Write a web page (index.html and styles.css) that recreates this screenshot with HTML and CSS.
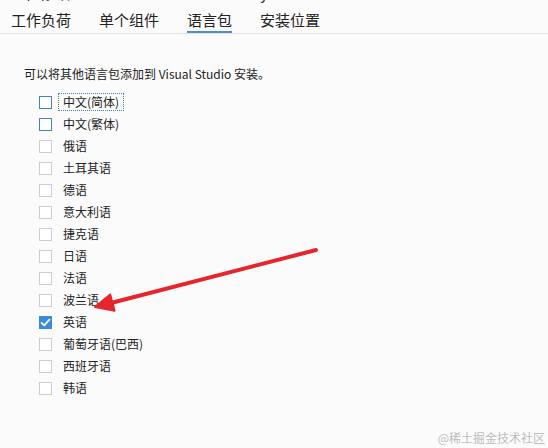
FILE: index.html
```html
<!DOCTYPE html>
<html lang="zh-CN">
<head>
    <meta charset="UTF-8">
    <meta name="viewport" content="width=device-width, initial-scale=1.0">
    <title>语言包</title>
    <link rel="stylesheet" href="styles.css">
</head>
<body>
    <div class="title-strip"><span>正在修改 — Visual Studio Community 2022</span></div>
    <div class="tabs">
        <div class="tab">工作负荷</div>
        <div class="tab">单个组件</div>
        <div class="tab active">语言包</div>
        <div class="tab">安装位置</div>
    </div>

    <div class="content">
        <p class="desc">可以将其他语言包添加到 Visual Studio 安装。</p>
        <ul class="lang-list">
            <li class="lang"><span class="box hot"></span><span class="label focus">中文(简体)</span></li>
            <li class="lang"><span class="box hot"></span><span class="label">中文(繁体)</span></li>
            <li class="lang"><span class="box"></span><span class="label">俄语</span></li>
            <li class="lang"><span class="box"></span><span class="label">土耳其语</span></li>
            <li class="lang"><span class="box"></span><span class="label">德语</span></li>
            <li class="lang"><span class="box"></span><span class="label">意大利语</span></li>
            <li class="lang"><span class="box"></span><span class="label">捷克语</span></li>
            <li class="lang"><span class="box"></span><span class="label">日语</span></li>
            <li class="lang"><span class="box"></span><span class="label">法语</span></li>
            <li class="lang"><span class="box"></span><span class="label">波兰语</span></li>
            <li class="lang">
                <span class="box checked">
                    <svg width="13" height="13" viewBox="0 0 13 13"><path d="M2.6 6.8 L5.2 9.3 L10.4 3.6" fill="none" stroke="#fff" stroke-width="1.8" stroke-linecap="round" stroke-linejoin="round"/></svg>
                </span><span class="label">英语</span>
            </li>
            <li class="lang"><span class="box"></span><span class="label">葡萄牙语(巴西)</span></li>
            <li class="lang"><span class="box"></span><span class="label">西班牙语</span></li>
            <li class="lang"><span class="box"></span><span class="label">韩语</span></li>
        </ul>
    </div>

    <!-- annotation arrow drawn over the list -->
    <svg class="arrow" width="548" height="448" viewBox="0 0 548 448">
        <line x1="316" y1="250" x2="111" y2="303" stroke="#e5262c" stroke-width="4" stroke-linecap="round"/>
        <polygon points="95,307 114.6,310.8 110.2,294.4" fill="#e5262c" stroke="#e5262c" stroke-width="2" stroke-linejoin="round"/>
    </svg>

    <div class="watermark">@稀土掘金技术社区</div>
</body>
</html>
```

FILE: styles.css
```css
body {
    margin: 0;
    font-family: "Noto Sans CJK SC", "Noto Sans", sans-serif;
    background-color: #fbfbfb;
    color: #222;
    position: relative;
    height: 448px;
    overflow: hidden;
}
.title-strip {
    height: 4px;
    overflow: hidden;
    padding-left: 10px;
    font-size: 15px;
    line-height: 18px;
    color: #222;
}
.title-strip span {
    display: block;
    margin-top: -16px;
}
.tabs {
    display: flex;
    gap: 28px;
    padding-left: 11px;
    border-bottom: 1px solid #e4e4e4;
}
.tab {
    font-size: 15px;
    line-height: 18px;
    padding: 7px 0 2px;
    border-bottom: 2px solid transparent;
    color: #222;
}
.tab.active {
    border-bottom-color: #4a8fd6;
}
.content {
    padding-left: 24px;
}
.desc {
    margin: 32px 0 9px;
    font-size: 12px;
    line-height: 16px;
    color: #222;
}
.lang-list {
    list-style: none;
    margin: 0;
    padding: 0 0 0 15px;
}
.lang {
    height: 22px;
    display: flex;
    align-items: center;
}
.box {
    width: 11px;
    height: 11px;
    border: 1px solid #cdcdcd;
    background-color: #fff;
    margin-right: 6px;
    flex-shrink: 0;
}
.box.hot {
    border-color: #3f83cc;
}
.box.checked {
    width: 13px;
    height: 13px;
    border: none;
    background-color: #3b8ae2;
}
.box svg {
    display: block;
}
.label {
    font-size: 12px;
    line-height: 16px;
    padding: 0 4px;
    border: 1px dotted transparent;
    color: #222;
}
.label.focus {
    border-color: #3f7fc6;
}
.arrow {
    position: absolute;
    left: 0;
    top: 0;
    pointer-events: none;
}
.watermark {
    position: absolute;
    right: 3px;
    bottom: 2px;
    font-size: 12px;
    color: #bdbdbd;
}
```
